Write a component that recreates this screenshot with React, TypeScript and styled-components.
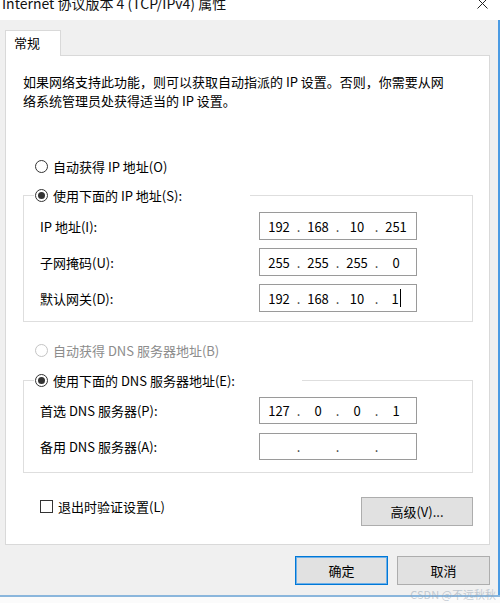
import React from 'react';
import styled, { createGlobalStyle } from 'styled-components';

const GlobalStyle = createGlobalStyle`
  html, body {
    margin: 0;
    padding: 0;
    background: #ffffff;
  }
  body {
    font-family: "Noto Sans CJK SC", "Noto Sans", sans-serif;
    font-size: 13px;
    color: #000;
  }
  * {
    box-sizing: border-box;
  }
`;

const Window = styled.div`
  position: relative;
  width: 500px;
  height: 603px;
  display: flex;
  flex-direction: column;
  overflow: hidden;
  background: #fff;
`;

const TitleBar = styled.div`
  flex: none;
  height: 20px;
  display: flex;
  justify-content: space-between;
  align-items: flex-start;
  overflow: hidden;
  background: #fff;
`;

const Title = styled.div`
  margin: -7px 0 0 2px;
  font-size: 14px;
  line-height: 20px;
  white-space: nowrap;
  color: #111;
`;

const CloseIcon = styled.svg`
  flex: none;
  margin: -2px 12px 0 0;
`;

const Body = styled.div`
  flex: 1;
  display: flex;
  flex-direction: column;
  background: #f0f0f0;
  padding: 10px 8px 0 5px;
  border-right: 2px solid #4b9be3;
`;

const TabStrip = styled.div`
  display: flex;
`;

const Tab = styled.div`
  position: relative;
  z-index: 1;
  width: 56px;
  height: 26px;
  padding-left: 8px;
  line-height: 24px;
  background: #fff;
  border: 1px solid #d9d9d9;
  border-bottom: none;
`;

const Panel = styled.div`
  margin-top: -1px;
  height: 490px;
  display: flex;
  flex-direction: column;
  background: #fff;
  border: 1px solid #d9d9d9;
  padding: 16px 16px 0 17px;
`;

const Description = styled.p`
  margin: 0;
  line-height: 19px;
  white-space: nowrap;
`;

const RadioRow = styled.label<{ $disabled?: boolean; $gap: number }>`
  display: flex;
  align-items: center;
  height: 20px;
  margin-top: ${({ $gap }) => $gap}px;
  padding-left: 12px;
  color: ${({ $disabled }) => ($disabled ? '#8c8c8c' : '#000')};
`;

const RadioCircle = styled.span<{ $checked?: boolean; $disabled?: boolean }>`
  flex: none;
  width: 13px;
  height: 13px;
  margin-right: 5px;
  border-radius: 50%;
  border: 1px solid ${({ $disabled }) => ($disabled ? '#c4c4c4' : '#333')};
  display: flex;
  align-items: center;
  justify-content: center;

  &::after {
    content: '';
    width: 7px;
    height: 7px;
    border-radius: 50%;
    background: #333;
    display: ${({ $checked }) => ($checked ? 'block' : 'none')};
  }
`;

const Group = styled.fieldset<{ $gap: number; $bottom: number }>`
  margin: ${({ $gap }) => $gap}px 0 0 0;
  min-inline-size: 0;
  border: 1px solid #dedede;
  padding: 7px 0 ${({ $bottom }) => $bottom}px 0;
`;

const Legend = styled.legend<{ $width: number }>`
  margin-left: 10px;
  width: ${({ $width }) => $width}px;
  height: 20px;
  padding: 0 0 0 1px;
  display: flex;
  align-items: center;
  background: #fff;
`;

const Rows = styled.div<{ $gap: number }>`
  display: grid;
  grid-template-columns: 219px 158px;
  row-gap: ${({ $gap }) => $gap}px;
  padding-left: 16px;
  align-items: center;
`;

const FieldLabel = styled.span`
  white-space: nowrap;
`;

const IpBox = styled.div<{ $h: number }>`
  height: ${({ $h }) => $h}px;
  border: 1px solid #9a9a9a;
  background: #fff;
  padding-left: 3px;
  display: flex;
  align-items: center;
`;

const Octet = styled.span`
  width: 32px;
  text-align: center;
  display: flex;
  justify-content: center;
  align-items: center;
  font-size: 13px;
`;

const Dot = styled.span`
  width: 7px;
  text-align: center;
  color: #333;
`;

const Caret = styled.span`
  display: inline-block;
  width: 1px;
  height: 18px;
  margin-left: 1px;
  background: #000;
`;

const BottomRow = styled.div`
  margin-top: 24px;
  display: flex;
  justify-content: space-between;
  align-items: flex-start;
  padding-left: 17px;
`;

const CheckLabel = styled.label`
  display: flex;
  align-items: center;
  height: 18px;
`;

const CheckBox = styled.span`
  width: 13px;
  height: 13px;
  margin-right: 5px;
  border: 1px solid #333;
  background: #fff;
`;

const Button = styled.button<{ $w: number; $focused?: boolean }>`
  width: ${({ $w }) => $w}px;
  height: 29px;
  margin: 0;
  padding: 0;
  font: inherit;
  color: #000;
  background: #e1e1e1;
  border: 1px solid ${({ $focused }) => ($focused ? '#0078d7' : '#adadad')};
  box-shadow: ${({ $focused }) => ($focused ? 'inset 0 0 0 1px #6fb0e8' : 'none')};
`;

const Footer = styled.div`
  margin-top: 11px;
  display: flex;
  justify-content: flex-end;
  gap: 9px;
`;

const BottomEdge = styled.div`
  flex: none;
  height: 8px;
  border-top: 2px solid #8ab6dc;
  background: #fbfbfb;
`;

const Watermark = styled.div`
  position: absolute;
  right: 4px;
  bottom: 1px;
  font-size: 11px;
  color: rgba(150, 165, 180, 0.55);
  white-space: nowrap;
`;

const IpField: React.FC<{ parts: string[]; h: number; caret?: boolean }> = ({ parts, h, caret }) => (
  <IpBox $h={h}>
    {parts.map((p, i) => (
      <React.Fragment key={i}>
        <Octet>
          {p}
          {caret && i === 3 && <Caret />}
        </Octet>
        {i < 3 && <Dot>.</Dot>}
      </React.Fragment>
    ))}
  </IpBox>
);

export default function App() {
  return (
    <>
      <GlobalStyle />
      <Window>
        <TitleBar>
          <Title>Internet 协议版本 4 (TCP/IPv4) 属性</Title>
          <CloseIcon width="11" height="11" viewBox="0 0 11 11">
            <path d="M0.5 0.5 L10.5 10.5 M10.5 0.5 L0.5 10.5" stroke="#222" strokeWidth="1" fill="none" />
          </CloseIcon>
        </TitleBar>
        <Body>
          <TabStrip>
            <Tab>常规</Tab>
          </TabStrip>
          <Panel>
            <Description>
              如果网络支持此功能，则可以获取自动指派的 IP 设置。否则，你需要从网
              <br />
              络系统管理员处获得适当的 IP 设置。
            </Description>

            <RadioRow $gap={46}>
              <RadioCircle />
              自动获得 IP 地址(O)
            </RadioRow>
            <Group $gap={9} $bottom={9}>
              <Legend $width={216}>
                <RadioCircle $checked />
                使用下面的 IP 地址(S):
              </Legend>
              <Rows $gap={8}>
                <FieldLabel>IP 地址(I):</FieldLabel>
                <IpField h={28} parts={['192', '168', '10', '251']} />
                <FieldLabel>子网掩码(U):</FieldLabel>
                <IpField h={28} parts={['255', '255', '255', '0']} />
                <FieldLabel>默认网关(D):</FieldLabel>
                <IpField h={28} parts={['192', '168', '10', '1']} caret />
              </Rows>
            </Group>

            <RadioRow $gap={18} $disabled>
              <RadioCircle $disabled />
              自动获得 DNS 服务器地址(B)
            </RadioRow>
            <Group $gap={10} $bottom={12}>
              <Legend $width={268}>
                <RadioCircle $checked />
                使用下面的 DNS 服务器地址(E):
              </Legend>
              <Rows $gap={9}>
                <FieldLabel>首选 DNS 服务器(P):</FieldLabel>
                <IpField h={27} parts={['127', '0', '0', '1']} />
                <FieldLabel>备用 DNS 服务器(A):</FieldLabel>
                <IpField h={27} parts={['', '', '', '']} />
              </Rows>
            </Group>

            <BottomRow>
              <CheckLabel>
                <CheckBox />
                退出时验证设置(L)
              </CheckLabel>
              <Button $w={112}>高级(V)...</Button>
            </BottomRow>
          </Panel>
          <Footer>
            <Button $w={93} $focused>确定</Button>
            <Button $w={93}>取消</Button>
          </Footer>
        </Body>
        <BottomEdge />
        <Watermark>CSDN @不远秋秋</Watermark>
      </Window>
    </>
  );
}
